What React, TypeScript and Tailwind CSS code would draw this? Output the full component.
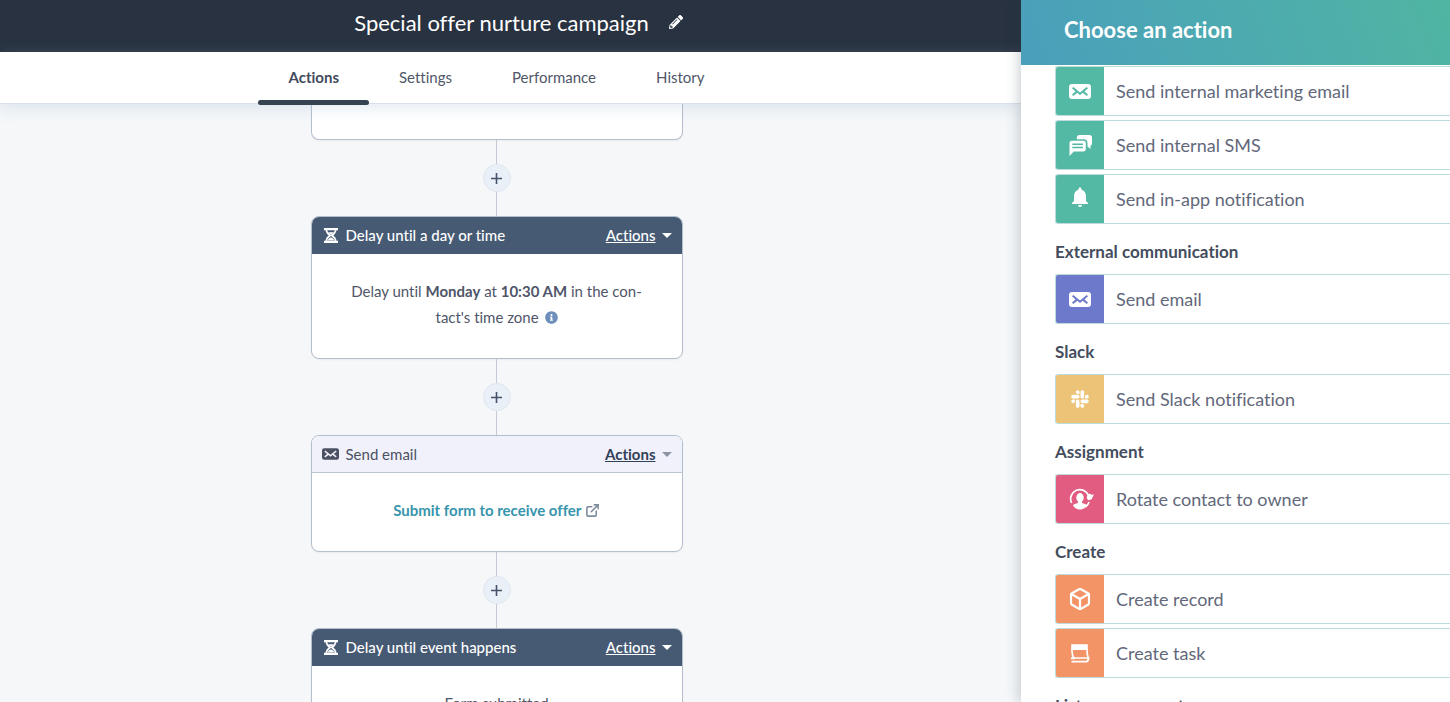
import type { ReactNode } from "react"
import { Box, ExternalLink } from "lucide-react"
import { FaInfoCircle, FaPencilAlt, FaSlack } from "react-icons/fa"
import { MdNotifications } from "react-icons/md"

const tabs = ["Actions", "Settings", "Performance", "History"]

function EnvelopeIcon({ className }: { className?: string }) {
  return (
    <svg viewBox="0 0 22 15" className={className} aria-hidden="true">
      <path
        fill="currentColor"
        fillRule="evenodd"
        d="M3 0h16a3 3 0 0 1 3 3v9a3 3 0 0 1-3 3H3a3 3 0 0 1-3-3V3a3 3 0 0 1 3-3ZM4.300 2.900 3 4.300 6.600 7.500 3 10.500l1.200 1.500L8.300 8.800 11 10.900l2.700-2.100 4.100 3.200 1.200-1.500L15.400 7.500 19 4.300l-1.300-1.400L11 8.500 4.300 2.900Z"
      />
    </svg>
  )
}

function HourglassIcon() {
  return (
    <svg viewBox="0 0 14 15" className="h-[15px] w-[14px]" aria-hidden="true">
      <path d="M0 1.200h14M0 13.800h14" stroke="currentColor" strokeWidth="2.200" />
      <path
        d="M2.300 1.500c0 3 1.600 4.500 3.700 6-2.100 1.500-3.700 3-3.700 6M11.700 1.500c0 3-1.600 4.500-3.700 6 2.100 1.500 3.700 3 3.700 6"
        fill="none"
        stroke="currentColor"
        strokeWidth="1.600"
      />
      <path d="M4 4.300h6L7 7ZM3.500 12.500C4.500 10.500 6 9.800 7 9.300c1 .5 2.500 1.200 3.500 3.200Z" fill="currentColor" />
    </svg>
  )
}

function ChatIcon() {
  return (
    <svg viewBox="0 0 23 21" className="h-[21px] w-[23px]" aria-hidden="true">
      <path
        fill="currentColor"
        d="M10.500 0h10A2.500 2.500 0 0 1 23 2.500v6a2.500 2.500 0 0 1-1.500 2.300V14l-3-2.600V8.200a4 4 0 0 0-4-4H7.800V2.600A2.700 2.700 0 0 1 10.500 0Z"
      />
      <path
        fill="currentColor"
        fillRule="evenodd"
        d="M3 5.700h11.500A2.300 2.300 0 0 1 16.800 8v6.200a2.300 2.300 0 0 1-2.300 2.300H4.800L.5 21V8A2.400 2.400 0 0 1 3 5.700Zm.3 2.900v1.500H14V8.600Zm0 3.100v1.500H14v-1.500Z"
      />
    </svg>
  )
}

function RotateContactIcon() {
  return (
    <svg viewBox="0 0 25 22" className="ml-0.5 h-[22px] w-[25px]" aria-hidden="true">
      <path
        d="M2.600 15A9.300 9.300 0 1 1 19.300 6.800M20 14a9.300 9.300 0 0 1-3.500 5"
        fill="none"
        stroke="currentColor"
        strokeWidth="1.700"
      />
      <path d="m17.500 9.800 7.500-3.700-2.300 5.100-3.500 1Z" fill="currentColor" />
      <circle cx="20.500" cy="8.300" r="2.500" fill="currentColor" />
      <ellipse cx="11" cy="9.700" rx="3.700" ry="4.600" fill="currentColor" />
      <path
        d="M9 12h4v3c2.500.5 4.300 1 5 2.500-1.600 2.600-4 4-7 4s-5.400-1.400-7-4c.7-1.500 2.500-2 5-2.500Z"
        fill="currentColor"
      />
    </svg>
  )
}

function TaskIcon() {
  return (
    <svg viewBox="0 0 20 19" className="h-[19px] w-[20px]" aria-hidden="true">
      <path d="M1.200.300h16.600v5.700H1.200Z" fill="currentColor" />
      <path
        d="M2 5c0 4 .2 6.500 1.800 9h14.700c-1.500-2.500-1.500-5-1.500-9"
        fill="none"
        stroke="currentColor"
        strokeWidth="1.700"
      />
      <path d="M1 14.200h4M1.500 17.600h14.800c1.200 0 2-1 2-3" fill="none" stroke="currentColor" strokeWidth="1.900" />
    </svg>
  )
}

type Action = { label: string; color: string; icon: ReactNode }
type Group = { title?: string; actions: Action[] }

const groups: Group[] = [
  {
    actions: [
      {
        label: "Send internal marketing email",
        color: "bg-[#53b9a5]",
        icon: <EnvelopeIcon className="h-[15px] w-[22px]" />,
      },
      { label: "Send internal SMS", color: "bg-[#53b9a5]", icon: <ChatIcon /> },
      {
        label: "Send in-app notification",
        color: "bg-[#53b9a5]",
        icon: <MdNotifications className="mb-1 size-6" />,
      },
    ],
  },
  {
    title: "External communication",
    actions: [
      { label: "Send email", color: "bg-[#6d79cb]", icon: <EnvelopeIcon className="h-[15px] w-[22px]" /> },
    ],
  },
  {
    title: "Slack",
    actions: [{ label: "Send Slack notification", color: "bg-[#edc377]", icon: <FaSlack className="size-5" /> }],
  },
  {
    title: "Assignment",
    actions: [{ label: "Rotate contact to owner", color: "bg-[#e15c80]", icon: <RotateContactIcon /> }],
  },
  {
    title: "Create",
    actions: [
      { label: "Create record", color: "bg-[#f29466]", icon: <Box className="size-6" strokeWidth={2.2} /> },
      { label: "Create task", color: "bg-[#f29466]", icon: <TaskIcon /> },
    ],
  },
  { title: "List management", actions: [] },
]

function Connector() {
  return (
    <div className="flex flex-col items-center">
      <div className="h-6 w-px bg-[#c3cad6]" />
      <button
        aria-label="Add step"
        className="flex size-7 items-center justify-center rounded-full border border-[#dfe6ee] bg-[#eaf0f8] text-[#46536a]"
      >
        <svg viewBox="0 0 11 11" className="size-[11px]" aria-hidden="true">
          <path d="M5.500 0v11M0 5.500h11" stroke="currentColor" strokeWidth="1.600" />
        </svg>
      </button>
      <div className="h-6 w-px bg-[#c3cad6]" />
    </div>
  )
}

type StepProps = { title: string; icon: ReactNode; light?: boolean; children: ReactNode }

function StepCard({ title, icon, light, children }: StepProps) {
  return (
    <section className="w-full overflow-hidden rounded-lg border border-[#b3bfcd] bg-white shadow-xs">
      <header
        className={
          light
            ? "flex h-[37px] items-center border-b border-[#bcc5d3] bg-[#f0f1fa] px-2.5 text-[#4b5163]"
            : "flex h-[37px] items-center bg-[#465a74] px-2.5 text-white"
        }
      >
        <span className="flex w-[18px] justify-center">{icon}</span>
        <h3 className={light ? "ml-1.5 text-[15px]" : "ml-1.5 text-[15px] font-medium"}>{title}</h3>
        <button className="ml-auto flex items-center gap-1.5 text-[15px]">
          <span className={light ? "font-bold text-[#33405a] underline" : "font-medium underline"}>Actions</span>
          <svg viewBox="0 0 10 5" className={light ? "h-[5px] w-2.5 text-[#8b95a3]" : "h-[5px] w-2.5"} aria-hidden="true">
            <path d="M0 0h10L5 5Z" fill="currentColor" />
          </svg>
        </button>
      </header>
      <div className="px-8 pt-6 pb-7 text-center text-[15px] leading-[26px] text-[#505669]">{children}</div>
    </section>
  )
}

function ActionPanel() {
  return (
    <aside className="relative z-20 flex w-[429px] shrink-0 flex-col bg-white shadow-[-2px_0_12px_rgba(45,62,80,0.25)]">
      <header className="flex h-[65px] shrink-0 items-center bg-linear-70 from-[#4a9fbb] to-[#50b5a2] px-[43px] pb-1.5">
        <h2 className="text-[22px] font-bold text-white">Choose an action</h2>
      </header>
      <div className="min-h-0 flex-1 overflow-hidden pt-px pl-[34px]">
        {groups.map((group) => (
          <section key={group.actions.length ? group.actions[0].label : group.title}>
            {group.title && (
              <h3 className="pt-4 pb-2.5 text-[17px] leading-6 font-bold text-[#434d5e]">{group.title}</h3>
            )}
            <div className="flex flex-col gap-1">
              {group.actions.map((action) => (
                <button
                  key={action.label}
                  className="flex h-[50px] items-stretch overflow-hidden rounded-l-[3px] border-y border-l border-[#bcdcdc] bg-white text-left"
                >
                  <span className={`flex w-12 items-center justify-center text-white ${action.color}`}>
                    {action.icon}
                  </span>
                  <span className="self-center pl-3 text-[18px] text-[#62687a]">{action.label}</span>
                </button>
              ))}
            </div>
          </section>
        ))}
      </div>
    </aside>
  )
}

export default function App() {
  return (
    <div className="flex h-screen overflow-hidden bg-[#f5f7f9] font-['Lato',sans-serif] [font-variant-ligatures:none]">
      <div className="flex min-w-0 flex-1 flex-col">
        <header className="flex h-[52px] shrink-0 items-center justify-center gap-5 bg-[#283240] pb-2 pl-4 text-white">
          <h1 className="text-[22px]">Special offer nurture campaign</h1>
          <button aria-label="Edit name">
            <FaPencilAlt className="size-3.5" />
          </button>
        </header>

        <nav className="relative z-10 flex h-[52px] shrink-0 justify-center border-b border-[#d9e0e8] bg-white pr-7 shadow-[0_4px_14px_rgba(160,185,210,0.3)]">
          {tabs.map((tab, i) => (
            <a
              key={tab}
              href={`#${tab.toLowerCase()}`}
              className="relative px-[30px] pt-[13px] text-[15px] leading-6 text-[#505669]"
            >
              {i === 0 ? <strong className="text-[#434b5c]">{tab}</strong> : tab}
              {i === 0 && <span className="absolute inset-x-0 -bottom-0.5 h-[5px] rounded-sm bg-[#364353]" />}
            </a>
          ))}
        </nav>

        <main className="flex min-h-0 flex-1 flex-col items-center overflow-hidden pr-7">
          <div className="flex w-[372px] shrink-0 flex-col">
            <div className="h-9 rounded-b-lg border border-t-0 border-[#b3bfcd] bg-white shadow-xs" />
            <Connector />
            <StepCard title="Delay until a day or time" icon={<HourglassIcon />}>
              <p>
                Delay until <strong>Monday</strong> at <strong>10:30 AM</strong> in the con-
                <br />
                tact's time zone <FaInfoCircle className="ml-0.5 inline size-[13px] align-[-1px] text-[#6e8fbb]" />
              </p>
            </StepCard>
            <Connector />
            <StepCard title="Send email" icon={<EnvelopeIcon className="h-3 w-[17px]" />} light>
              <a href="#email" className="font-bold text-[#3795ad]">
                Submit form to receive offer{" "}
                <ExternalLink className="inline size-[15px] align-[-2px] text-[#7d8b9c]" strokeWidth={2.5} />
              </a>
            </StepCard>
            <Connector />
            <StepCard title="Delay until event happens" icon={<HourglassIcon />}>
              <p>Form submitted</p>
            </StepCard>
          </div>
        </main>
      </div>
      <ActionPanel />
    </div>
  )
}
